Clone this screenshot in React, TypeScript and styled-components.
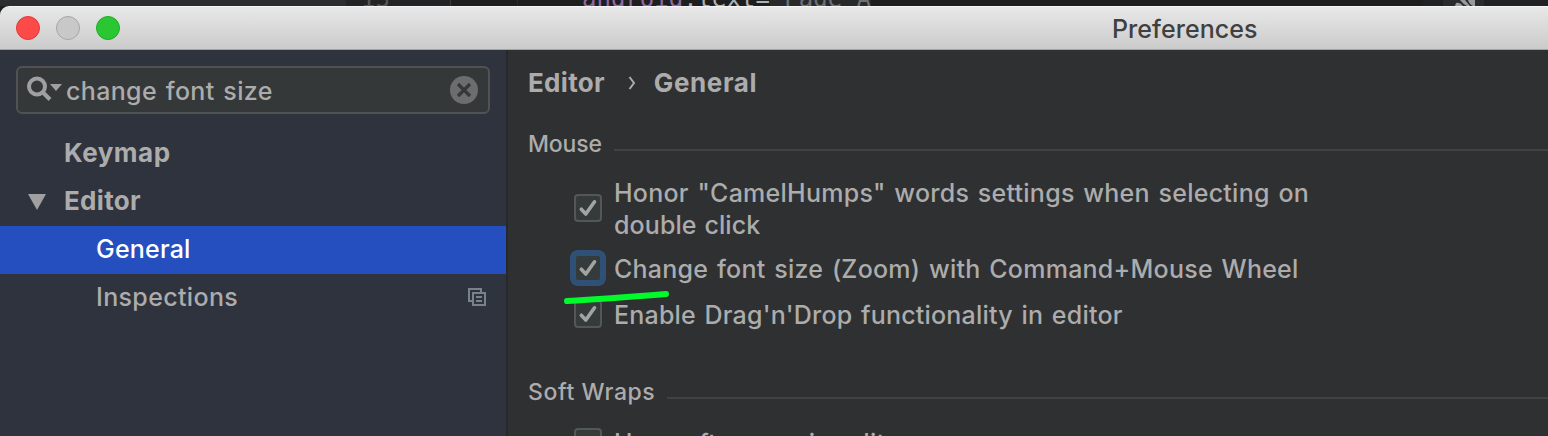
import React from "react";
import styled, { createGlobalStyle } from "styled-components";

const GlobalStyle = createGlobalStyle`
  * { box-sizing: border-box; }
  body { margin: 0; background: #1e1e1f; overflow: hidden; }
`;

const Screen = styled.div`
  width: 1548px;
  height: 436px;
  overflow: hidden;
  display: flex;
  flex-direction: column;
  background: #1e1e1f;
  font-family: Inter, "Liberation Sans", sans-serif;
  font-size: 25px;
  font-weight: 450;
  color: #acacac;
`;

const CodeStrip = styled.div`
  height: 6px;
  flex: none;
  display: flex;
  overflow: hidden;
  background: #1e1e1f;
  font-family: "DejaVu Sans Mono", monospace;
  font-size: 24px;
`;

const ProjectPane = styled.div`
  width: 346px;
  background: #2b2d30;
`;

const Gutter = styled.div`
  width: 105px;
  padding-left: 15px;
  background: #232425;
  border-right: 1px solid #3a3a3a;
  color: #555759;
`;

const CodeLine = styled.div`
  width: 425px;
  margin-left: 66px;
  padding-left: 64px;
  border-left: 1px solid #2b2b2b;
  white-space: pre;
`;

const Shifted = styled.span`
  display: block;
  height: 28px;
  line-height: 28px;
  margin-top: -15px;
`;

const Token = styled.span<{ $color: string; $bg?: string }>`
  color: ${(p) => p.$color};
  background: ${(p) => p.$bg ?? "transparent"};
`;

const ToolStrip = styled.div`
  margin-left: auto;
  width: 125px;
  padding-left: 20px;
  display: flex;
  background: #1f2125;
`;

const ToolButton = styled.div`
  width: 41px;
  display: flex;
  background: #292b30;
`;

const Dialog = styled.div`
  flex: 1;
  display: flex;
  flex-direction: column;
  border-top-left-radius: 9px;
  overflow: hidden;
`;

const TitleBar = styled.header`
  height: 44px;
  flex: none;
  display: flex;
  align-items: center;
  padding-left: 16px;
  background: linear-gradient(#e8e8e8, #cbcbcb);
  border-top: 1px solid #f6f6f6;
  border-bottom: 1px solid #a4a4a4;
`;

const Light = styled.span<{ $fill: string; $edge: string }>`
  width: 24px;
  height: 24px;
  margin-right: 16px;
  border-radius: 50%;
  background: ${(p) => p.$fill};
  border: 1px solid ${(p) => p.$edge};
`;

const Text = styled.span<{ $track?: number; $word?: number }>`
  white-space: nowrap;
  letter-spacing: ${(p) => p.$track ?? 0.25}px;
  word-spacing: ${(p) => p.$word ?? 1.8}px;
`;

const Title = styled(Text)`
  margin-left: 976px;
  padding-top: 2px;
  color: #404040;
`;

const Body = styled.div`
  flex: 1;
  min-height: 0;
  display: flex;
`;

const Sidebar = styled.aside`
  width: 508px;
  flex: none;
  background: #2f333d;
  border-right: 2px solid #27282b;
`;

const SearchField = styled.div`
  width: 474px;
  height: 48px;
  margin: 16px 0 16px 16px;
  padding: 0 10px 0 8px;
  display: flex;
  align-items: center;
  background: #353839;
  border: 2px solid #505253;
  border-radius: 6px;
`;

const SearchText = styled(Text)`
  flex: 1;
  margin-left: 2px;
  padding-top: 1px;
`;

const TreeRow = styled.div<{ $indent: number; $selected?: boolean; $bold?: boolean }>`
  height: 48px;
  padding: 0 20px ${(p) => (p.$bold ? 4 : 2)}px ${(p) => p.$indent}px;
  display: flex;
  align-items: center;
  justify-content: space-between;
  background: ${(p) => (p.$selected ? "#254fbf" : "transparent")};
  color: ${(p) => (p.$selected ? "#ffffff" : "inherit")};
  font-size: ${(p) => (p.$bold ? 26 : 25)}px;
  font-weight: ${(p) => (p.$bold ? 700 : 450)};
`;

const Expandable = styled.span`
  display: flex;
  align-items: center;
  gap: 18px;
`;

const Disclosure = styled.svg`
  margin-top: 3px;
`;

const Main = styled.main`
  flex: 1;
  min-width: 0;
  padding-left: 20px;
  background: #2f3032;
`;

const Breadcrumb = styled.nav`
  height: 66px;
  padding-bottom: 2px;
  display: flex;
  align-items: center;
  font-size: 26px;
  font-weight: 700;
`;

const Chevron = styled.svg`
  margin: 2px 18px 0 23px;
`;

const SectionHeader = styled.div<{ $top: number }>`
  height: 32px;
  margin-top: ${(p) => p.$top}px;
  padding-top: 2px;
  display: flex;
  align-items: center;
  font-size: 23px;
`;

const Rule = styled.span`
  flex: 1;
  height: 2px;
  margin: 12px 0 0 12px;
  background: #414244;
`;

const Options = styled.div`
  padding: 16px 0 0 46px;
`;

const Option = styled.label<{ $height: number }>`
  height: ${(p) => p.$height}px;
  display: flex;
  align-items: center;
`;

const OptionText = styled.span`
  display: flex;
  flex-direction: column;
  margin-left: 12px;
  padding-top: 1px;
  line-height: 32px;
`;

const Box = styled.span<{ $focused?: boolean }>`
  width: 28px;
  height: 28px;
  flex: none;
  display: flex;
  border: 2px solid ${(p) => (p.$focused ? "#2f5077" : "#545758")};
  border-radius: 4px;
  background: #353a3b;
  box-shadow: ${(p) => (p.$focused ? "0 0 0 4px #2f5077" : "none")};
`;

const Underline = styled.svg`
  position: absolute;
  left: 560px;
  top: 286px;
`;

function Check() {
  return (
    <svg width="24" height="24" viewBox="0 0 24 24" fill="none">
      <path d="M5.3 13.2 L9.8 18 L18.5 5.8" stroke="#a2a4a4" strokeWidth="3.6" strokeLinecap="round" strokeLinejoin="round" />
    </svg>
  );
}

export default function App() {
  return (
    <Screen>
      <GlobalStyle />
      <CodeStrip>
        <ProjectPane />
        <Gutter><Shifted>13</Shifted></Gutter>
        <CodeLine>
          <Shifted>
            <Token $color="#9068a5">android</Token>
            <Token $color="#b0b0b0">:text=</Token>
            <Token $color="#6e7072" $bg="#28292a">"Page A</Token>
          </Shifted>
        </CodeLine>
        <ToolStrip>
          <ToolButton>
            <svg width="40" height="6" viewBox="0 0 40 6">
              <path d="M13 3 Q17 2 20 6 H12Z M17 0 H22 L27 6 H24 Q20 4 17 0Z M25 0 H32 V6 H30 Q26 4 25 0Z" fill="#98999b" />
            </svg>
          </ToolButton>
        </ToolStrip>
      </CodeStrip>
      <Dialog>
        <TitleBar>
          <Light $fill="#fc4a48" $edge="#e23a38" />
          <Light $fill="#c8c8c8" $edge="#a6a6a6" />
          <Light $fill="#2bc732" $edge="#22ab28" />
          <Title $track={0.05}>Preferences</Title>
        </TitleBar>
        <Body>
          <Sidebar>
            <SearchField>
              <svg width="38" height="28" viewBox="0 0 38 28" fill="none">
                <circle cx="11" cy="10.5" r="8" stroke="#a0a0a0" strokeWidth="4" />
                <path d="M16.5 16 L24 23.5" stroke="#a0a0a0" strokeWidth="4" />
                <path d="M24 8 H36 L30 15Z" fill="#a0a0a0" />
              </svg>
              <SearchText $track={0.34}>change font size</SearchText>
              <svg width="28" height="28" viewBox="0 0 28 28">
                <circle cx="14" cy="14" r="14" fill="#6c6d6e" />
                <path d="M8 8 L20 20 M20 8 L8 20" stroke="#353839" strokeWidth="3.2" />
              </svg>
            </SearchField>
            <TreeRow $indent={64} $bold><Text $track={0.5}>Keymap</Text></TreeRow>
            <TreeRow $indent={28} $bold>
              <Expandable>
                <Disclosure width="18" height="16" viewBox="0 0 18 16"><path d="M0 0 H18 L9 16Z" fill="#a0a0a0" /></Disclosure>
                <Text $track={0.3}>Editor</Text>
              </Expandable>
            </TreeRow>
            <TreeRow $indent={96} $selected><Text $track={0.2}>General</Text></TreeRow>
            <TreeRow $indent={96}>
              <Text $track={0.35}>Inspections</Text>
              <svg width="18" height="18" viewBox="0 0 18 18" fill="none" stroke="#79818a" strokeWidth="2">
                <path d="M4 13 H1 V1 H13 V4 M5 5 H17 V17 H5Z M8 9 H14 M8 13 H14" />
              </svg>
            </TreeRow>
          </Sidebar>
          <Main>
            <Breadcrumb>
              <Text $track={0.3}>Editor</Text>
              <Chevron width="8" height="14" viewBox="0 0 8 14" fill="none">
                <path d="M1.5 1 L6 7 L1.5 13" stroke="#acacac" strokeWidth="2" />
              </Chevron>
              <Text $track={0.6}>General</Text>
            </Breadcrumb>
            <SectionHeader $top={11}><Text $track={-0.15}>Mouse</Text><Rule /></SectionHeader>
            <Options>
              <Option $height={66}>
                <Box><Check /></Box>
                <OptionText>
                  <Text>Honor "CamelHumps" words settings when selecting on</Text>
                  <Text $track={0.1} $word={1}>double click</Text>
                </OptionText>
              </Option>
              <Option $height={54}>
                <Box $focused><Check /></Box>
                <OptionText><Text>Change font size (Zoom) with Command+Mouse Wheel</Text></OptionText>
              </Option>
              <Option $height={38}>
                <Box><Check /></Box>
                <OptionText><Text $track={0.2}>Enable Drag'n'Drop functionality in editor</Text></OptionText>
              </Option>
            </Options>
            <SectionHeader $top={42}><Text $track={0.6} $word={0}>Soft Wraps</Text><Rule /></SectionHeader>
            <Options>
              <Option $height={38}>
                <Box />
                <OptionText><Text>Use soft wraps in editor</Text></OptionText>
              </Option>
            </Options>
          </Main>
        </Body>
      </Dialog>
      <Underline width="116" height="22" viewBox="0 0 116 22">
        <path d="M7 15 Q45 13 106 8" stroke="#02fa2c" strokeWidth="6" strokeLinecap="round" fill="none" />
      </Underline>
    </Screen>
  );
}
